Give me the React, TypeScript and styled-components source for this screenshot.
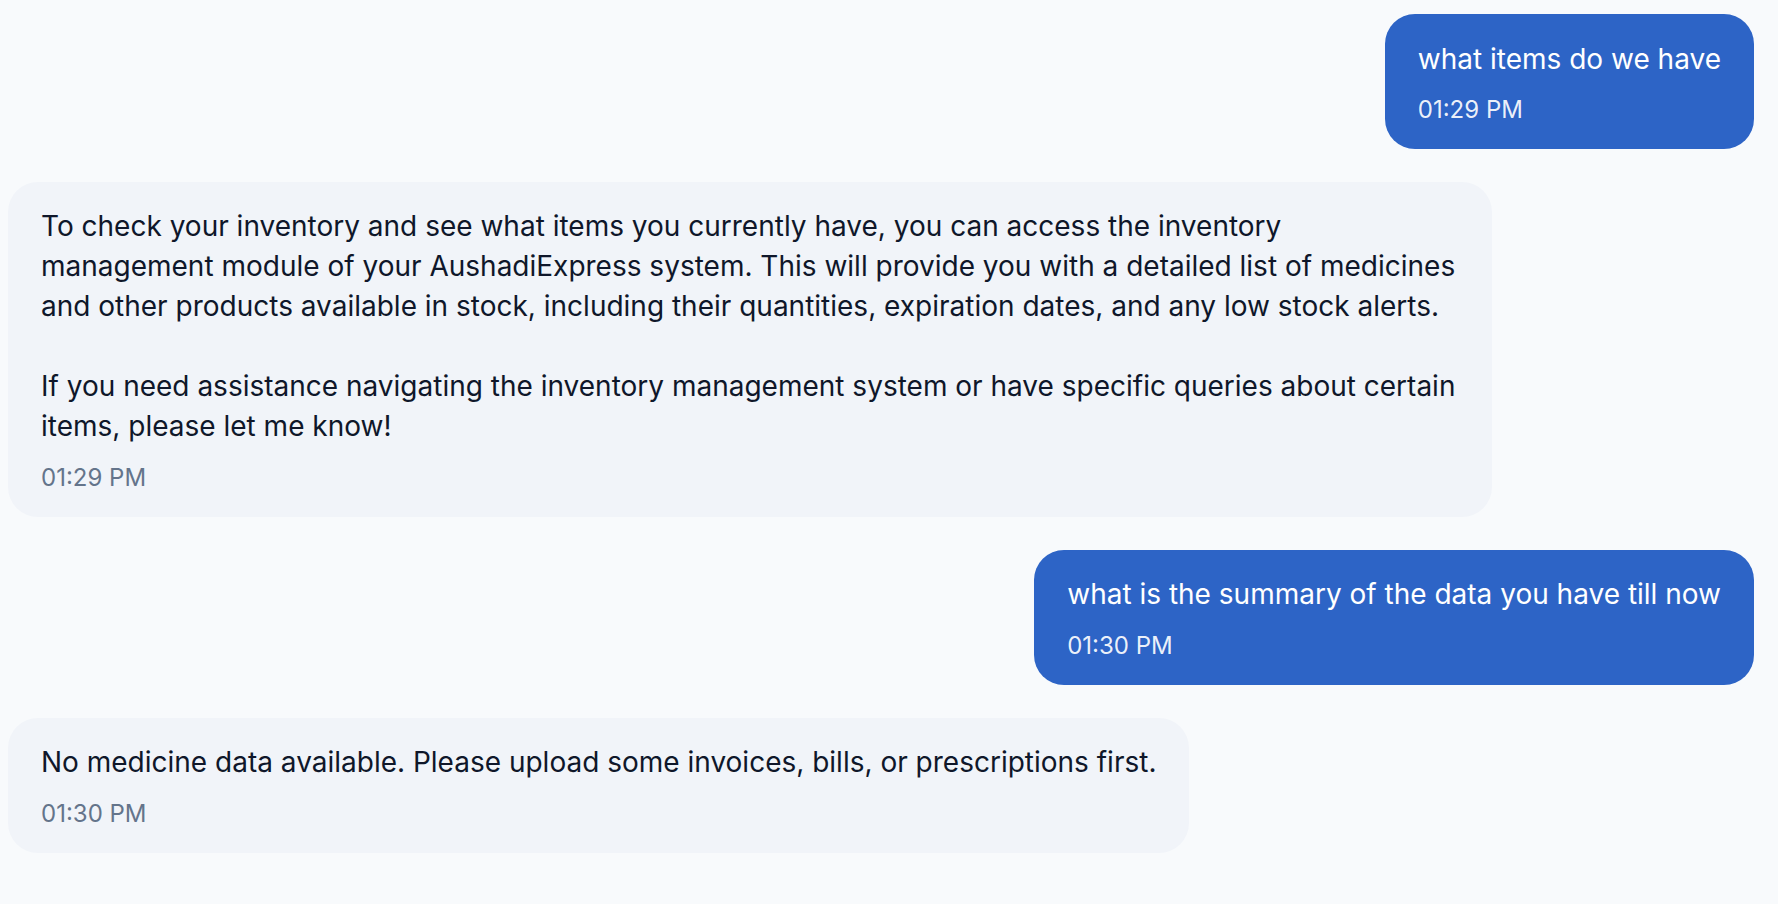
import React from "react";
import styled, { createGlobalStyle } from "styled-components";

const GlobalStyle = createGlobalStyle`
  html, body {
    margin: 0;
    padding: 0;
    background: #f8fafc;
  }
  body {
    font-family: Inter, "Noto Sans", "Liberation Sans", sans-serif;
  }
`;

const Thread = styled.div`
  display: flex;
  flex-direction: column;
  gap: 33px;
  padding: 14px 24px 40px 8px;
  box-sizing: border-box;
  width: 100%;
`;

const Row = styled.div<{ $mine: boolean }>`
  display: flex;
  justify-content: ${(p) => (p.$mine ? "flex-end" : "flex-start")};
`;

const Bubble = styled.div<{ $mine: boolean }>`
  max-width: 85%;
  box-sizing: border-box;
  padding: 24.5px 33px 22.7px 33px;
  border-radius: 30px;
  background: ${(p) => (p.$mine ? "#2d64c6" : "#f1f4f9")};
  color: ${(p) => (p.$mine ? "#ffffff" : "#0f172a")};
`;

const Text = styled.div`
  font-size: 28px;
  line-height: 40px;
  white-space: pre-line;
`;

const Time = styled.div<{ $mine: boolean }>`
  margin-top: 15.8px;
  font-size: 24px;
  line-height: 32px;
  color: ${(p) => (p.$mine ? "rgba(255,255,255,0.92)" : "#64748b")};
`;

type Msg = { mine: boolean; text: string; time: string };

const messages: Msg[] = [
  { mine: true, text: "what items do we have", time: "01:29 PM" },
  {
    mine: false,
    text:
      "To check your inventory and see what items you currently have, you can access the inventory management module of your AushadiExpress system. This will provide you with a detailed list of medicines and other products available in stock, including their quantities, expiration dates, and any low stock alerts.\n\nIf you need assistance navigating the inventory management system or have specific queries about certain items, please let me know!",
    time: "01:29 PM",
  },
  { mine: true, text: "what is the summary of the data you have till now", time: "01:30 PM" },
  {
    mine: false,
    text: "No medicine data available. Please upload some invoices, bills, or prescriptions first.",
    time: "01:30 PM",
  },
];

export default function App() {
  return (
    <>
      <GlobalStyle />
      <Thread>
        {messages.map((m, i) => (
          <Row key={i} $mine={m.mine}>
            <Bubble $mine={m.mine}>
              <Text>{m.text}</Text>
              <Time $mine={m.mine}>{m.time}</Time>
            </Bubble>
          </Row>
        ))}
      </Thread>
    </>
  );
}
